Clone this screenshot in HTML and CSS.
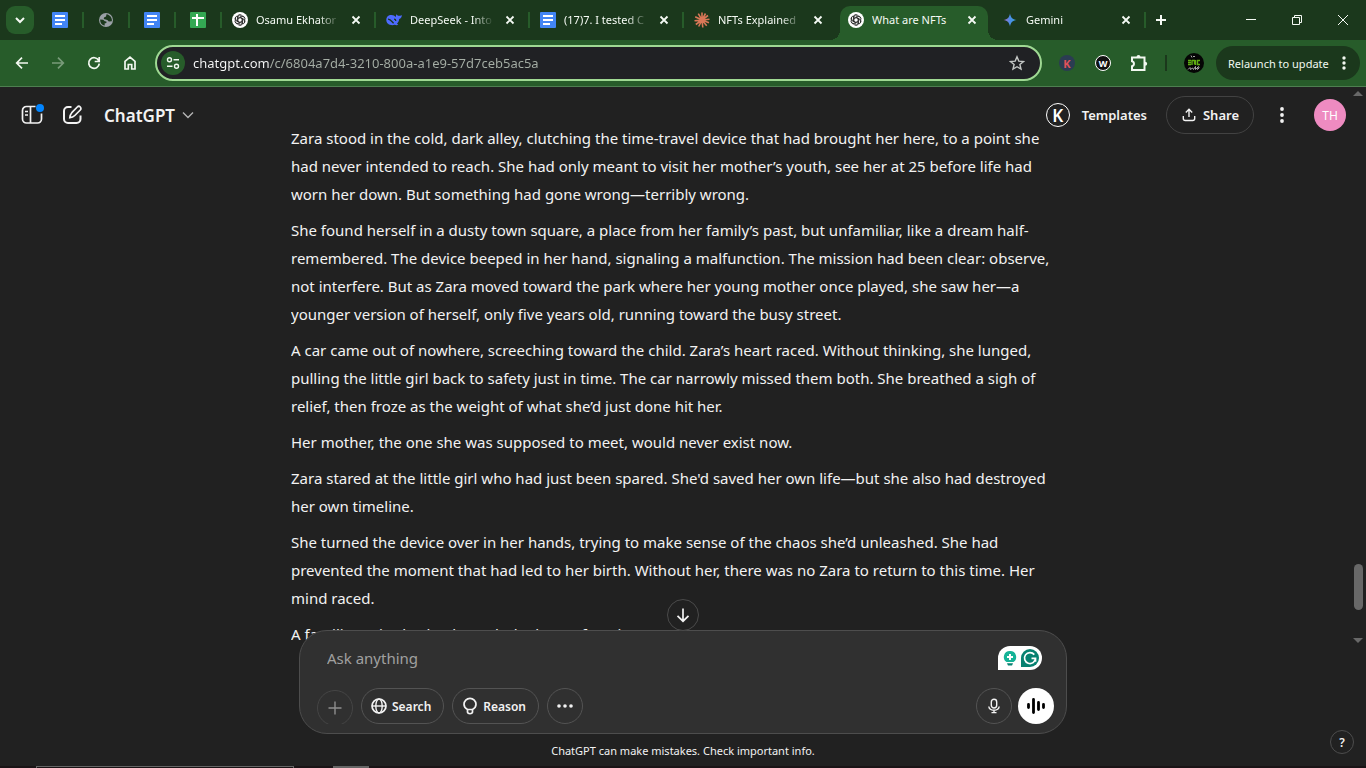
FILE: index.html
```html
<!DOCTYPE html>
<html lang="en">
<head>
    <meta charset="UTF-8">
    <meta name="viewport" content="width=device-width, initial-scale=1.0">
    <title>What are NFTs</title>
    <link rel="stylesheet" href="styles.css">
</head>
<body>
    <!-- Shared icons -->
    <svg class="sprite" aria-hidden="true">
        <symbol id="docs" viewBox="0 0 16 16">
            <rect width="16" height="16" rx="1" fill="#4285f4"/>
            <path d="M3 4h10M3 8h10M3 12h7" stroke="#fff" stroke-width="2"/>
        </symbol>
        <symbol id="knot" viewBox="0 0 16 16">
            <circle cx="8" cy="8" r="8" fill="#fff"/>
            <g fill="none" stroke="#222" stroke-width="0.8">
                <path id="petal" d="M6 8.9V5.1a2.3 2.3 0 0 1 4.3-1.1M6 6.2l3.3-1.9a2.2 2.2 0 0 1 3.3 2"/>
                <use href="#petal" transform="rotate(60 8 8)"/>
                <use href="#petal" transform="rotate(120 8 8)"/>
                <use href="#petal" transform="rotate(180 8 8)"/>
                <use href="#petal" transform="rotate(240 8 8)"/>
                <use href="#petal" transform="rotate(300 8 8)"/>
            </g>
        </symbol>
        <symbol id="cross" viewBox="0 0 16 16">
            <path d="M4.500 4.500l7 7M11.500 4.500l-7 7" stroke="currentColor" stroke-width="1.800"/>
        </symbol>
    </svg>

    <!-- Browser tabs -->
    <div class="tab-strip">
        <button class="tab-search" aria-label="Search tabs">
            <svg width="16" height="16" viewBox="0 0 16 16"><path d="M4 6l4 4 4-4" class="line thicker"/></svg>
        </button>
        <a class="tab pinned" href="#" aria-label="Document"><svg class="favicon"><use href="#docs"/></svg></a>
        <a class="tab pinned" href="#" aria-label="Web page">
            <svg class="favicon" viewBox="0 0 16 16">
                <circle cx="8" cy="8" r="7" fill="#9aa0a6"/>
                <path d="M2.200 7.500l3 .2 1.600 1.500 1.600.2v1.500l-1.800.7.2 2C4 13.200 2 10.800 2.200 7.500zM8.500 2.300L8 4.500 6 5.500l-.2 1.600 3.500.8 1.500 1.600 3-.2c.6-3-1.600-6.400-5.300-7z" fill="#1b381c"/>
            </svg>
        </a>
        <a class="tab pinned" href="#" aria-label="Document"><svg class="favicon"><use href="#docs"/></svg></a>
        <a class="tab pinned" href="#" aria-label="Spreadsheet">
            <svg class="favicon" viewBox="0 0 16 16">
                <rect width="16" height="16" rx="1" fill="#34a853"/>
                <path d="M2 6h12M7 2v12" stroke="#fff" stroke-width="2"/>
            </svg>
        </a>
        <div class="tab">
            <svg class="favicon"><use href="#knot"/></svg>
            <a class="tab-title" href="#">Osamu Ekhator</a>
            <button class="tab-close" aria-label="Close tab"><svg><use href="#cross"/></svg></button>
        </div>
        <div class="tab">
            <svg class="favicon" viewBox="0 0 16 16">
                <path d="M.3 8.200C.2 4.500 2.800 2.800 5.500 3c2 .1 3.200.8 4.200 2 .5-1.200.2-2 .6-2.600.6 0 1 .7 1.400 1.200 1.400.4 2.600.3 4-.6.3 2.200-.8 3.500-2.500 3.900-.2 2.100-1.100 3.600-2.200 4.800l1.300 1c-1.300.8-2.600.4-3.500.1C4.500 14 .4 12 .3 8.200z" fill="#4d6bfe"/>
                <path d="M2 7.200c2.300-.2 3.800 2.300 5.600 4.100M8 7.200c1 0 1.800.7 1.800 1.800" fill="none" stroke="#1b381c" stroke-width="1.300"/>
            </svg>
            <a class="tab-title" href="#">DeepSeek - Into</a>
            <button class="tab-close" aria-label="Close tab"><svg><use href="#cross"/></svg></button>
        </div>
        <div class="tab">
            <svg class="favicon"><use href="#docs"/></svg>
            <a class="tab-title" href="#">(17)7. I tested C</a>
            <button class="tab-close" aria-label="Close tab"><svg><use href="#cross"/></svg></button>
        </div>
        <div class="tab before-active">
            <svg class="favicon" viewBox="0 0 16 16">
                <path d="M8 8V.5M8 8l3.500-6.500M8 8l6-4.500M8 8l7.500-.8M8 8l7 2.800M8 8l4.700 5.700M8 8l.8 7.500M8 8l-3.300 6.500M8 8l-6.200 4.500M8 8L.5 8.800M8 8L1.200 4.800M8 8L4.300 1.600" stroke="#d97757" stroke-width="1.600"/>
            </svg>
            <a class="tab-title" href="#">NFTs Explained</a>
            <button class="tab-close" aria-label="Close tab"><svg><use href="#cross"/></svg></button>
        </div>
        <div class="tab active">
            <svg class="favicon"><use href="#knot"/></svg>
            <a class="tab-title" href="#">What are NFTs</a>
            <button class="tab-close" aria-label="Close tab"><svg><use href="#cross"/></svg></button>
        </div>
        <div class="tab">
            <svg class="favicon" viewBox="0 0 16 16">
                <defs><linearGradient id="spark"><stop offset="0.100" stop-color="#9b72cb"/><stop offset="0.500" stop-color="#4b8ee8"/><stop offset="0.900" stop-color="#3fa0e0"/></linearGradient></defs>
                <path d="M8 1.500C8.700 5.500 10.500 7.300 14.500 8 10.500 8.700 8.700 10.500 8 14.500 7.300 10.500 5.500 8.700 1.500 8 5.500 7.300 7.300 5.500 8 1.500z" fill="url(#spark)"/>
            </svg>
            <a class="tab-title" href="#">Gemini</a>
            <button class="tab-close" aria-label="Close tab"><svg><use href="#cross"/></svg></button>
        </div>
        <button class="new-tab" aria-label="New tab">
            <svg width="16" height="16" viewBox="0 0 16 16"><path d="M8 3v10M3 8h10" class="line thicker"/></svg>
        </button>
        <div class="window-buttons">
            <button aria-label="Minimize"><svg width="12" height="12" viewBox="0 0 12 12"><path d="M1 5.500h10" class="line thin"/></svg></button>
            <button aria-label="Restore"><svg width="12" height="12" viewBox="0 0 12 12"><path d="M1.500 3.500h7v7h-7zM3.500 3.500v-2h7v7h-2" class="line thin"/></svg></button>
            <button aria-label="Close"><svg width="12" height="12" viewBox="0 0 12 12"><path d="M1 1l10 10M11 1L1 11" class="line thin"/></svg></button>
        </div>
    </div>

    <!-- Address bar -->
    <div class="toolbar">
        <button class="tool" aria-label="Back"><svg width="16" height="16" viewBox="0 0 16 16"><path d="M14 8H3M8 2.700L2.700 8 8 13.300" class="line thick"/></svg></button>
        <button class="tool faded" aria-label="Forward"><svg width="16" height="16" viewBox="0 0 16 16"><path d="M2 8h11M8 2.700L13.300 8 8 13.300" class="line thick"/></svg></button>
        <button class="tool" aria-label="Reload"><svg width="16" height="16" viewBox="0 0 16 16"><path d="M12.700 5.500A5.300 5.300 0 1 0 13.300 8.700M13.200 2v4.500H8.700" class="line thick"/></svg></button>
        <button class="tool" aria-label="Home"><svg width="16" height="16" viewBox="0 0 16 16"><path d="M3 14V6.300L8 2.200l5 4.100V14H9.700V9.500H6.300V14z" class="line thick"/></svg></button>
        <div class="omnibox">
            <button class="site-info" aria-label="View site information">
                <svg width="16" height="16" viewBox="0 0 16 16"><circle cx="4.500" cy="4.800" r="2" class="line"/><path d="M8.500 4.800H14M2 11.200h5.500" class="line"/><circle cx="11.500" cy="11.200" r="2" class="line"/></svg>
            </button>
            <input class="url" type="text" aria-label="Address" value="chatgpt.com/c/6804a7d4-3210-800a-a1e9-57d7ceb5ac5a">
            <button class="star" aria-label="Bookmark this tab">
                <svg width="16" height="16" viewBox="0 0 16 16"><path d="M8 1.800l1.800 4.300 4.700.4-3.600 3 1.100 4.600-4-2.400-4 2.400 1.100-4.600-3.600-3 4.700-.4z" class="line"/></svg>
            </button>
        </div>
        <div class="extensions">
            <button class="ext ext-k" aria-label="K extension">K</button>
            <button class="ext ext-w" aria-label="W extension">W</button>
            <button class="tool" aria-label="Extensions">
                <svg width="18" height="18" viewBox="0 0 18 18"><path d="M2 3.500h12.500V16H2v-3.800c2.600-.6 2.600-4.300 0-4.900z" class="line thicker"/><path d="M6.500 3.200a2 2.200 0 0 1 4 0zM15 7.800a2.200 2 0 0 1 0 4z" fill="currentColor"/></svg>
            </button>
        </div>
        <span class="tool-divider"></span>
        <button class="profile" aria-label="Profile">
            <svg width="20" height="20" viewBox="0 0 20 20">
                <circle cx="10" cy="10" r="10" fill="#050505"/>
                <path d="M7 2.500l1 2M9 3.500h2M4 16.500l2-2 .5 2 2-1.500 1 1.500 2-3v3l3-3-1 3 2-2" fill="none" stroke="#bbb" stroke-width="0.900"/>
                <path d="M4 7.500h3M4 9.500h3M4 11.500h3M8 7v5M8 7.500h2.500v4M11.500 7v5M16 7.500h-2.500v4H16" fill="none" stroke="#5fae12" stroke-width="1.400"/>
            </svg>
        </button>
        <button class="relaunch">Relaunch to update
            <svg width="4" height="16" viewBox="0 0 4 16" fill="currentColor"><circle cx="2" cy="3" r="1.700"/><circle cx="2" cy="8" r="1.700"/><circle cx="2" cy="13" r="1.700"/></svg>
        </button>
    </div>

    <!-- Chat page -->
    <main class="chat">
        <header class="chat-header">
            <button class="icon-button" aria-label="Open sidebar">
                <svg width="24" height="24" viewBox="0 0 24 24"><path d="M15.500 3.500H6.500a4 4 0 0 0-4 4v8.500a4 4 0 0 0 4 4h11a4 4 0 0 0 4-4v-5.500M10.500 3.500v16.500M5 8.500h3M5 12h3" class="line thick"/></svg>
                <span class="dot"></span>
            </button>
            <button class="icon-button" aria-label="New chat">
                <svg width="24" height="24" viewBox="0 0 24 24"><path d="M11.500 4H8a4 4 0 0 0-4 4v8a4 4 0 0 0 4 4h8.500a4 4 0 0 0 4-4v-3.500" class="line thicker"/><path d="M17.300 4a2.100 2.100 0 0 1 3 3l-5.500 5.500c-.9.900-2.700 2-5 2.200.2-2.300 1.100-4 2-5z" class="line thick"/></svg>
            </button>
            <button class="model">ChatGPT
                <svg width="14" height="14" viewBox="0 0 14 14"><path d="M2 4.500l5 5 5-5" class="line"/></svg>
            </button>
            <div class="header-right">
                <a class="templates" href="#"><span class="k-badge">K</span>Templates</a>
                <button class="share">
                    <svg width="16" height="16" viewBox="0 0 16 16"><path d="M8 10V2.500M4.800 5.500L8 2.300l3.200 3.200M2.300 9v2.500a2 2 0 0 0 2 2h7.400a2 2 0 0 0 2-2V9" class="line"/></svg>
                    Share
                </button>
                <button class="icon-button" aria-label="More options">
                    <svg width="6" height="18" viewBox="0 0 6 18" fill="currentColor"><circle cx="3" cy="3" r="1.900"/><circle cx="3" cy="9" r="1.900"/><circle cx="3" cy="15" r="1.900"/></svg>
                </button>
                <button class="avatar" aria-label="Account">TH</button>
            </div>
        </header>

        <article class="conversation">
            <p>Zara stood in the cold, dark alley, clutching the time-travel device that had brought her here, to a point she had never intended to reach. She had only meant to visit her mother’s youth, see her at 25 before life had worn her down. But something had gone wrong—terribly wrong.</p>
            <p>She found herself in a dusty town square, a place from her family’s past, but unfamiliar, like a dream half-remembered. The device beeped in her hand, signaling a malfunction. The mission had been clear: observe, not interfere. But as Zara moved toward the park where her young mother once played, she saw her—a younger version of herself, only five years old, running toward the busy street.</p>
            <p>A car came out of nowhere, screeching toward the child. Zara’s heart raced. Without thinking, she lunged, pulling the little girl back to safety just in time. The car narrowly missed them both. She breathed a sigh of relief, then froze as the weight of what she’d just done hit her.</p>
            <p>Her mother, the one she was supposed to meet, would never exist now.</p>
            <p>Zara stared at the little girl who had just been spared. She'd saved her own life—but she also had destroyed her own timeline.</p>
            <p>She turned the device over in her hands, trying to make sense of the chaos she’d unleashed. She had prevented the moment that had led to her birth. Without her, there was no Zara to return to this time. Her mind raced.</p>
            <p>A familiar voice broke through the haze of panic.</p>
        </article>

        <div class="scrollbar" aria-hidden="true">
            <span class="arrow-up"></span>
            <span class="thumb"></span>
            <span class="arrow-down"></span>
        </div>

        <div class="dock">
            <button class="scroll-down" aria-label="Scroll to bottom">
                <svg width="18" height="18" viewBox="0 0 18 18"><path d="M9 2.500v12.500M3.500 9.800L9 15.200l5.500-5.400" class="line thick"/></svg>
            </button>
            <form class="composer">
                <div class="prompt-row">
                    <input class="prompt" type="text" placeholder="Ask anything" aria-label="Message">
                    <button class="grammar" type="button" aria-label="Writing suggestions">
                        <svg width="18" height="18" viewBox="0 0 18 18"><path d="M9 2a6 6 0 0 0-3.500 11h7A6 6 0 0 0 9 2z" fill="#15b397"/><path d="M9 5v6M6 8h6" stroke="#fff" stroke-width="2"/><path d="M6 14.300h6l-1 2.200H7z" fill="#078171"/></svg>
                        <svg width="18" height="18" viewBox="0 0 18 18"><path d="M9 0a9 9 0 1 1 0 18H0V9a9 9 0 0 1 9-9z" fill="#078171"/><path d="M13.300 5.600A5.500 5.500 0 1 0 14.500 9.300h-4M14.500 9.300v3.500" fill="none" stroke="#fff" stroke-width="1.700"/></svg>
                    </button>
                </div>
                <div class="actions">
                    <span class="attach-clip">
                        <button class="round attach" type="button" aria-label="Add files"><svg width="16" height="16" viewBox="0 0 16 16"><path d="M8 1.500v13M1.500 8h13" class="line"/></svg></button>
                    </span>
                    <button class="pill" type="button">
                        <svg width="18" height="18" viewBox="0 0 18 18"><circle cx="9" cy="9" r="7" class="line thick"/><ellipse cx="9" cy="9" rx="3.200" ry="7" class="line"/><path d="M2 9h14" class="line"/></svg>
                        Search
                    </button>
                    <button class="pill" type="button">
                        <svg width="18" height="18" viewBox="0 0 18 18"><path d="M6.500 12.500C4.200 11.300 3 9.500 3 7.300a6 6 0 0 1 12 0c0 2.200-1.200 4-3.500 5.200zM6.500 12.500v2.800c.4 1.900 4.600 1.900 5 0v-2.800" class="line thick"/></svg>
                        Reason
                    </button>
                    <button class="round" type="button" aria-label="More tools">
                        <svg width="16" height="6" viewBox="0 0 16 6" fill="currentColor"><circle cx="2" cy="3" r="1.800"/><circle cx="8" cy="3" r="1.800"/><circle cx="14" cy="3" r="1.800"/></svg>
                    </button>
                    <div class="voice-actions">
                        <button class="round" type="button" aria-label="Dictate">
                            <svg width="16" height="16" viewBox="0 0 16 16"><rect x="5.300" y="1.200" width="5.400" height="8.800" rx="2.700" class="line"/><path d="M2.800 8.500c.6 5 9.800 5 10.400 0M8 12.300v2.200M5.500 14.600h5" class="line"/></svg>
                        </button>
                        <button class="round voice" type="button" aria-label="Use voice mode">
                            <svg width="20" height="20" viewBox="0 0 20 20"><path d="M2.500 8.500v3M7.500 3.500v13M12.500 6.500v7M17.500 8.500v3" stroke="currentColor" stroke-width="2.800" stroke-linecap="round"/></svg>
                        </button>
                    </div>
                </div>
            </form>
            <p class="disclaimer">ChatGPT can make mistakes. Check important info.</p>
            <button class="help" aria-label="Help">?</button>
        </div>
    </main>

    <!-- Top edge of the taskbar -->
    <div class="taskbar">
        <span class="task-search"></span>
        <span class="task-item"></span>
    </div>
</body>
</html>
```

FILE: styles.css
```css
* {
    margin: 0;
    padding: 0;
    box-sizing: border-box;
}

body {
    display: flex;
    flex-direction: column;
    height: 100vh;
    overflow: hidden;
    background-color: #212121;
    color: #f2f2f2;
    font-family: 'Noto Sans', 'Open Sans', sans-serif;
}

button, input {
    font: inherit;
    color: inherit;
    background: none;
    border: none;
    outline: none;
}

button {
    display: flex;
    align-items: center;
    justify-content: center;
    flex-shrink: 0;
    cursor: pointer;
}

a {
    color: inherit;
    text-decoration: none;
}

svg {
    flex-shrink: 0;
}

.sprite {
    position: absolute;
    width: 0;
    height: 0;
}

.line {
    fill: none;
    stroke: currentColor;
    stroke-width: 1.4;
}

.thin {
    stroke-width: 1;
}

.thick {
    stroke-width: 1.7;
}

.thicker {
    stroke-width: 2;
}

/* Tab strip */
.tab-strip {
    display: flex;
    align-items: center;
    height: 40px;
    flex-shrink: 0;
    padding-left: 6px;
    background-color: #1b381c;
    color: #f5faf4;
    font-size: 11px;
}

.tab-search {
    width: 28px;
    height: 28px;
    margin-right: 4px;
    border-radius: 9px;
    background-color: #275c2a;
}

.tab {
    display: flex;
    align-items: center;
    gap: 8px;
    width: 154px;
    height: 16px;
    padding: 0 10px;
    border-right: 2px solid #275c2a;
}

.pinned {
    width: 46px;
    padding: 0 14px;
}

.favicon {
    width: 16px;
    height: 16px;
}

.tab-title {
    flex: 1;
    min-width: 0;
    overflow: hidden;
    white-space: nowrap;
    line-height: 20px;
    -webkit-mask-image: linear-gradient(90deg, #000 75%, transparent);
    mask-image: linear-gradient(90deg, #000 75%, transparent);
}

.tab-close {
    width: 16px;
    height: 16px;
}

.tab-close svg {
    width: 16px;
    height: 16px;
}

.before-active {
    border-color: transparent;
}

.active {
    position: relative;
    align-self: flex-end;
    width: 148px;
    height: 34px;
    margin: 0 4px 0 2px;
    padding: 0 8px 6px;
    border: none;
    border-radius: 10px 10px 0 0;
    background-color: #275c2a;
}

.active .tab-title {
    -webkit-mask-image: none;
    mask-image: none;
}

/* Curved feet of the active tab */
.active::before,
.active::after {
    content: "";
    position: absolute;
    bottom: 0;
    width: 10px;
    height: 10px;
}

.active::before {
    right: 100%;
    background: radial-gradient(circle at 0 0, transparent 10px, #275c2a 10px);
}

.active::after {
    left: 100%;
    background: radial-gradient(circle at 100% 0, transparent 10px, #275c2a 10px);
}

.new-tab {
    width: 30px;
    height: 28px;
}

.window-buttons {
    display: flex;
    margin-left: auto;
}

.window-buttons button {
    width: 46px;
    height: 40px;
}

/* Toolbar */
.toolbar {
    display: flex;
    align-items: center;
    height: 47px;
    flex-shrink: 0;
    padding: 0 6px 0 4px;
    background-color: #275c2a;
    border-bottom: 1px solid #4d7f50;
    color: #f2f8f0;
}

.tool {
    width: 36px;
    height: 36px;
}

.faded {
    opacity: 0.4;
}

.omnibox {
    display: flex;
    align-items: center;
    flex: 1;
    height: 36px;
    margin: 0 7px;
    padding: 0 15px 0 4px;
    border: 2px solid #9fd993;
    border-radius: 18px;
    background-color: #202124;
}

.site-info {
    width: 24px;
    height: 24px;
    border-radius: 50%;
    background-color: #275c2a;
}

/* Host is bright, the path is dimmed */
.url {
    flex: 1;
    min-width: 0;
    margin-left: 8px;
    font-size: 13px;
    line-height: 20px;
    color: #e8eaed;
    background-image: linear-gradient(90deg, #f8f9fa 77px, #a6afa6 77px);
    -webkit-background-clip: text;
    background-clip: text;
    -webkit-text-fill-color: transparent;
}

.star {
    color: #c4c7c5;
}

.extensions {
    display: flex;
    align-items: center;
}

.ext {
    width: 16px;
    height: 16px;
    margin: 0 10px;
    border-radius: 50%;
    font-size: 11px;
    font-weight: 700;
}

.ext-k {
    background-color: #2b3c52;
    color: #e0525a;
}

.ext-w {
    border: 1px solid #fff;
    background-color: #111;
    color: #fff;
    font-size: 9px;
}

.tool-divider {
    width: 2px;
    height: 16px;
    margin: 0 17px 0 8px;
    background-color: #1b381c;
}

.profile {
    margin-right: 12px;
}

.relaunch {
    justify-content: space-between;
    width: 144px;
    height: 34px;
    padding: 0 14px 0 12px;
    border-radius: 17px;
    background-color: #1b381c;
    font-size: 11px;
}

/* Chat page */
.chat {
    position: relative;
    display: flex;
    flex: 1;
    min-height: 0;
}

.chat-header {
    position: absolute;
    top: 0;
    left: 0;
    right: 16px;
    display: flex;
    align-items: center;
    height: 56px;
    padding: 0 4px 0 12px;
}

.icon-button {
    position: relative;
    width: 40px;
    height: 40px;
}

.dot {
    position: absolute;
    top: 9px;
    right: 8px;
    width: 8px;
    height: 8px;
    border-radius: 50%;
    background-color: #0285ff;
}

.model {
    gap: 6px;
    margin-left: 12px;
    font-size: 17px;
    font-weight: 600;
}

.model svg {
    color: #b4b4b4;
}

.header-right {
    display: flex;
    align-items: center;
    margin-left: auto;
    font-size: 13px;
    font-weight: 600;
}

.templates {
    display: flex;
    align-items: center;
    gap: 12px;
}

.k-badge {
    display: flex;
    align-items: center;
    justify-content: center;
    width: 24px;
    height: 24px;
    border: 1px solid #fff;
    border-radius: 50%;
    color: #fff;
    font-size: 17px;
}

.share {
    gap: 6px;
    height: 38px;
    margin: 0 8px 0 19px;
    padding: 0 14px;
    border: 1px solid #424242;
    border-radius: 19px;
}

.avatar {
    width: 32px;
    height: 32px;
    margin-left: 12px;
    border-radius: 50%;
    background-color: #ee8bc1;
    color: #fff;
    font-size: 12px;
    font-weight: 400;
}

.conversation {
    display: flex;
    flex-direction: column;
    gap: 8px;
    width: 768px;
    margin: 0 auto;
    padding-top: 37px;
    overflow: hidden;
    font-size: 15px;
    line-height: 28px;
}

.scrollbar {
    display: flex;
    flex-direction: column;
    align-items: center;
    width: 16px;
    height: 560px;
    padding: 4px 0;
}

.arrow-up,
.arrow-down {
    border-left: 5px solid transparent;
    border-right: 5px solid transparent;
}

.arrow-up {
    margin-bottom: auto;
    border-bottom: 5px solid #686868;
}

.thumb {
    width: 9px;
    height: 46px;
    margin-bottom: 28px;
    border-radius: 5px;
    background-color: #686868;
}

.arrow-down {
    border-top: 5px solid #686868;
}

/* Composer */
.dock {
    position: absolute;
    left: 0;
    right: 0;
    bottom: 0;
    display: flex;
    flex-direction: column;
    align-items: center;
}

.scroll-down {
    position: absolute;
    bottom: 100%;
    width: 32px;
    height: 32px;
    margin-bottom: -1px;
    border: 1px solid #4b4b4b;
    border-radius: 50%;
    background-color: #212121;
}

.composer {
    display: flex;
    flex-direction: column;
    gap: 18px;
    width: 768px;
    padding: 14px 12px 9px 17px;
    border: 1px solid #4d4d4d;
    border-radius: 28px;
    background-color: #303030;
}

.prompt-row {
    display: flex;
    align-items: center;
    padding: 0 12px 0 10px;
}

.prompt {
    flex: 1;
    height: 25px;
    font-size: 15px;
}

.prompt::placeholder {
    color: #a0a0a0;
}

.grammar {
    gap: 2px;
    height: 24px;
    padding: 0 3px;
    border-radius: 12px 12px 12px 0;
    background-color: #fff;
}

.actions {
    display: flex;
    align-items: center;
    gap: 8px;
}

.attach-clip {
    height: 36px;
    padding-top: 2px;
    overflow: hidden;
}

.round {
    width: 36px;
    height: 36px;
    border: 1px solid #535353;
    border-radius: 50%;
}

.attach {
    border-color: #454545;
    color: #8e8e8e;
}

.pill {
    gap: 4px;
    height: 36px;
    padding: 0 12px 0 8px;
    border: 1px solid #535353;
    border-radius: 18px;
    font-size: 12px;
    font-weight: 600;
}

.voice-actions {
    display: flex;
    gap: 6px;
    margin-left: auto;
}

.voice {
    border: none;
    background-color: #fff;
    color: #000;
}

.disclaimer {
    padding: 8px 0 7px;
    font-size: 11px;
    line-height: 17px;
}

.help {
    position: absolute;
    right: 12px;
    bottom: 12px;
    width: 24px;
    height: 24px;
    border: 1px solid #4d4d4d;
    border-radius: 50%;
    font-size: 12px;
    font-weight: 600;
}

/* Taskbar */
.taskbar {
    display: flex;
    gap: 39px;
    height: 2px;
    flex-shrink: 0;
    padding-left: 36px;
    background-color: #1a1416;
}

.task-search {
    width: 258px;
    border: 1px solid #666;
    border-bottom: none;
}

.task-item {
    width: 36px;
    background-color: #666;
}
```
